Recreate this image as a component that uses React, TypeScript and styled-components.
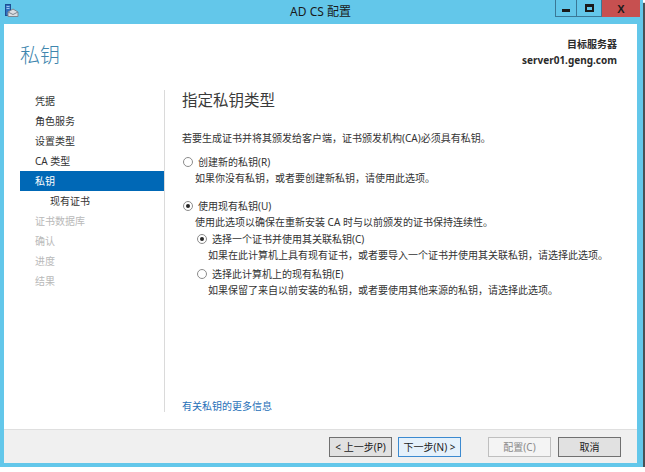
import styled, { createGlobalStyle, css } from 'styled-components';

const GlobalStyle = createGlobalStyle`
  html, body {
    margin: 0;
    padding: 0;
    background: #ffffff;
  }
  body {
    font-family: "Noto Sans", "Noto Sans CJK SC", sans-serif;
    color: #333333;
  }
  * {
    box-sizing: border-box;
  }
`;

const navItems: { label: string; state: 'done' | 'active' | 'sub' | 'todo' }[] = [
  { label: '凭据', state: 'done' },
  { label: '角色服务', state: 'done' },
  { label: '设置类型', state: 'done' },
  { label: 'CA 类型', state: 'done' },
  { label: '私钥', state: 'active' },
  { label: '现有证书', state: 'sub' },
  { label: '证书数据库', state: 'todo' },
  { label: '确认', state: 'todo' },
  { label: '进度', state: 'todo' },
  { label: '结果', state: 'todo' },
];

function AppIcon(): JSX.Element {
  return (
    <svg width="14" height="13" viewBox="0 0 14 13">
      <rect x="0.5" y="0.5" width="5" height="11" fill="#2f6fbf" stroke="#1d4f93" />
      <rect x="1.5" y="2" width="3" height="1" fill="#9cc4ef" />
      <rect x="1.5" y="4" width="3" height="1" fill="#9cc4ef" />
      <path d="M3 12.5 L3 8 L8 5 L13 8 L13 12.5 Z" fill="#d9dde2" stroke="#7d8791" />
      <path d="M3 8 L8 10.5 L13 8" fill="none" stroke="#7d8791" />
    </svg>
  );
}

export default function App(): JSX.Element {
  return (
    <>
      <GlobalStyle />
      <Window>
        <TitleBar>
          <TitleIcon>
            <AppIcon />
          </TitleIcon>
          <TitleText>AD CS 配置</TitleText>
          <Controls>
            <CaptionButton>
              <MinGlyph />
            </CaptionButton>
            <CaptionButton $wide>
              <MaxGlyph />
            </CaptionButton>
            <CloseButton>X</CloseButton>
          </Controls>
        </TitleBar>
        <Client>
          <Header>
            <PageTitle>私钥</PageTitle>
            <TargetInfo>
              <TargetLine>目标服务器</TargetLine>
              <TargetLine>server01.geng.com</TargetLine>
            </TargetInfo>
          </Header>
          <Body>
            <Nav>
              {navItems.map((item) => (
                <NavItem key={item.label} $state={item.state}>
                  {item.label}
                </NavItem>
              ))}
            </Nav>
            <Main>
              <Heading>指定私钥类型</Heading>
              <Intro>若要生成证书并将其颁发给客户端，证书颁发机构(CA)必须具有私钥。</Intro>
              <OptionRow $level={0} $top={8}>
                <Radio $checked={false} />
                <span>创建新的私钥(R)</span>
              </OptionRow>
              <Desc $level={0}>如果你没有私钥，或者要创建新私钥，请使用此选项。</Desc>
              <OptionRow $level={0} $top={12}>
                <Radio $checked />
                <span>使用现有私钥(U)</span>
              </OptionRow>
              <Desc $level={0}>使用此选项以确保在重新安装 CA 时与以前颁发的证书保持连续性。</Desc>
              <OptionRow $level={1} $top={1}>
                <Radio $checked />
                <span>选择一个证书并使用其关联私钥(C)</span>
              </OptionRow>
              <Desc $level={1}>
                如果在此计算机上具有现有证书，或者要导入一个证书并使用其关联私钥，请选择此选项。
              </Desc>
              <OptionRow $level={1} $top={3}>
                <Radio $checked={false} />
                <span>选择此计算机上的现有私钥(E)</span>
              </OptionRow>
              <Desc $level={1}>如果保留了来自以前安装的私钥，或者要使用其他来源的私钥，请选择此选项。</Desc>
              <MoreLink href="#">有关私钥的更多信息</MoreLink>
            </Main>
          </Body>
          <Footer>
            <Button>&lt; 上一步(P)</Button>
            <Button $variant="default">下一步(N) &gt;</Button>
            <Button $variant="disabled" $gap={27}>
              配置(C)
            </Button>
            <Button $gap={7}>取消</Button>
          </Footer>
        </Client>
      </Window>
    </>
  );
}

const Window = styled.div`
  display: flex;
  flex-direction: column;
  width: 643px;
  height: 467px;
  padding: 0 6px 4px 4px;
  background: #63c7ea;
  box-shadow: 2px 3px 1px rgba(40, 50, 55, 0.85);
`;

const TitleBar = styled.div`
  position: relative;
  display: flex;
  align-items: flex-start;
  justify-content: center;
  height: 24px;
  flex-shrink: 0;
`;

const TitleIcon = styled.div`
  position: absolute;
  left: 1px;
  top: 4px;
  display: flex;
`;

const TitleText = styled.div`
  font-size: 12px;
  line-height: 24px;
  color: #1a1a1a;
`;

const Controls = styled.div`
  position: absolute;
  top: 0;
  right: -3px;
  display: flex;
`;

const CaptionButton = styled.div<{ $wide?: boolean }>`
  display: flex;
  align-items: center;
  justify-content: center;
  width: ${(p) => (p.$wide ? 25 : 22)}px;
  height: 17px;
  border: 1px solid #3a7896;
  border-top: none;
  ${(p) =>
    p.$wide &&
    css`
      border-left: none;
    `}
`;

const MinGlyph = styled.div`
  width: 8px;
  height: 3px;
  margin-top: 5px;
  background: #1a1a1a;
`;

const MaxGlyph = styled.div`
  width: 9px;
  height: 8px;
  border: 2px solid #1a1a1a;
  border-top-width: 3px;
`;

const CloseButton = styled.div`
  display: flex;
  align-items: center;
  justify-content: center;
  width: 38px;
  height: 17px;
  background: #c75050;
  color: #1a1a1a;
  font-family: "Liberation Sans", sans-serif;
  font-size: 11px;
  font-weight: 700;
`;

const Client = styled.div`
  display: flex;
  flex-direction: column;
  flex: 1;
  background: #ffffff;
`;

const Header = styled.div`
  display: flex;
  justify-content: space-between;
  align-items: flex-start;
  height: 66px;
  padding: 12px 20px 0 16px;
  flex-shrink: 0;
`;

const PageTitle = styled.div`
  margin-top: 8px;
  font-size: 20px;
  font-weight: 300;
  line-height: 24px;
  color: #3f86ae;
`;

const TargetInfo = styled.div`
  display: flex;
  flex-direction: column;
  align-items: flex-end;
`;

const TargetLine = styled.div`
  font-size: 10px;
  font-weight: 700;
  line-height: 16px;
  color: #2b2b2b;
`;

const Body = styled.div`
  display: flex;
  height: 322px;
  flex-shrink: 0;
`;

const Nav = styled.div`
  width: 161px;
  padding: 1px 0 0 16px;
  border-right: 1px solid #dadada;
`;

const NavItem = styled.div<{ $state: 'done' | 'active' | 'sub' | 'todo' }>`
  height: 20px;
  line-height: 20px;
  font-size: 10px;
  padding-left: ${(p) => (p.$state === 'sub' ? 30 : 15)}px;
  color: ${(p) => (p.$state === 'todo' ? '#b9b9b9' : p.$state === 'active' ? '#ffffff' : '#333333')};
  background: ${(p) => (p.$state === 'active' ? '#0068b6' : 'transparent')};
`;

const Main = styled.div`
  display: flex;
  flex-direction: column;
  flex: 1;
  padding-left: 17px;
`;

const Heading = styled.div`
  font-size: 15.5px;
  line-height: 20px;
  color: #3a3a3a;
`;

const Intro = styled.div`
  margin-top: 20px;
  font-size: 10px;
  line-height: 16px;
  color: #333333;
`;

const OptionRow = styled.div<{ $level: number; $top: number }>`
  display: flex;
  align-items: center;
  gap: 5px;
  margin-top: ${(p) => p.$top}px;
  padding-left: ${(p) => 1 + p.$level * 14}px;
  font-size: 10px;
  line-height: 16px;
  color: #333333;
`;

const Radio = styled.span<{ $checked: boolean }>`
  display: flex;
  align-items: center;
  justify-content: center;
  width: 10px;
  height: 10px;
  border: 1px solid #8c8c8c;
  border-radius: 50%;
  background: #ffffff;
  &::after {
    content: '';
    width: 4px;
    height: 4px;
    border-radius: 50%;
    background: ${(p) => (p.$checked ? '#262626' : 'transparent')};
  }
`;

const Desc = styled.div<{ $level: number }>`
  padding-left: ${(p) => 13 + p.$level * 13}px;
  font-size: 10px;
  line-height: 16px;
  color: #333333;
`;

const MoreLink = styled.a`
  margin-top: auto;
  font-size: 10px;
  line-height: 12px;
  color: #1f70b8;
  text-decoration: none;
`;

const Footer = styled.div`
  display: flex;
  align-items: center;
  justify-content: flex-end;
  height: 34px;
  margin-top: auto;
  padding: 0 16px 0 0;
  background: #f0f0f0;
  border-top: 1px solid #dfdfdf;
`;

const Button = styled.div<{ $variant?: 'normal' | 'default' | 'disabled'; $gap?: number }>`
  display: flex;
  align-items: center;
  justify-content: center;
  width: 63px;
  height: 20px;
  margin-left: ${(p) => p.$gap ?? 6}px;
  font-size: 10px;
  color: #1a1a1a;
  border: 1px solid #707070;
  background: #e1e1e1;
  ${(p) =>
    p.$variant === 'default' &&
    css`
      border-color: #3c8ad0;
      background: #e5f1fb;
    `}
  ${(p) =>
    p.$variant === 'disabled' &&
    css`
      border-color: #bfbfbf;
      background: #f4f4f4;
      color: #8a8a8a;
    `}
`;
